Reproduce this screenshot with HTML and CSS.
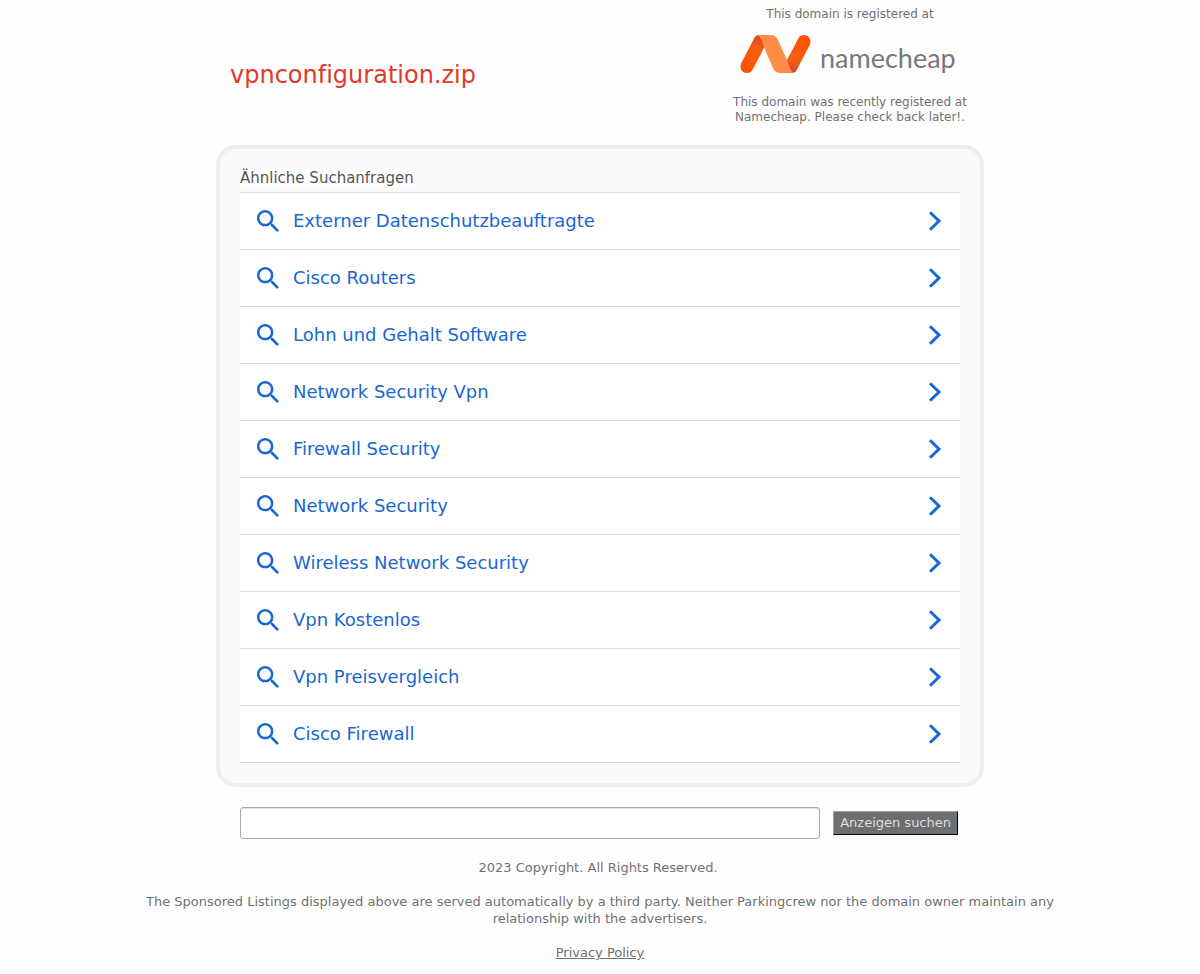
FILE: index.html
```html
<!DOCTYPE html>
<html lang="de">
<head>
<meta charset="utf-8">
<meta name="viewport" content="width=device-width, initial-scale=1">
<title>vpnconfiguration.zip</title>
<link rel="stylesheet" href="styles.css">
</head>
<body>
<svg class="sprite" aria-hidden="true">
  <symbol id="search" viewBox="3 3 17.490 17.490"><path fill="currentColor" d="M15.500 14h-.79l-.28-.27C15.410 12.590 16 11.110 16 9.500 16 5.910 13.090 3 9.500 3S3 5.910 3 9.500 5.910 16 9.500 16c1.610 0 3.090-.59 4.230-1.570l.27.28v.79l5 4.990L20.490 19l-4.990-5zm-6 0C7.010 14 5 11.990 5 9.500S7.010 5 9.500 5 14 7.010 14 9.500 11.990 14 9.500 14z"/></symbol>
  <symbol id="chevron" viewBox="0 0 14 20"><path d="M2 1.200 11 10 2 18.800" fill="none" stroke="currentColor" stroke-width="3"/></symbol>
</svg>
<header class="header">
  <h1 class="domain">vpnconfiguration.zip</h1>
  <div class="registrar">
    <p class="note">This domain is registered at</p>
    <a class="logo" href="#">
      <svg class="mark" viewBox="0 0 70 38" aria-hidden="true">
        <defs>
          <linearGradient id="left" x1="18" y1="0" x2="6" y2="34" gradientUnits="userSpaceOnUse"><stop offset="0" stop-color="#d93d30"/><stop offset=".35" stop-color="#f2600f"/><stop offset="1" stop-color="#ff5100"/></linearGradient>
          <linearGradient id="right" x1="52" y1="38" x2="64" y2="4" gradientUnits="userSpaceOnUse"><stop offset="0" stop-color="#d93d30"/><stop offset=".35" stop-color="#f2600f"/><stop offset="1" stop-color="#ff5100"/></linearGradient>
        </defs>
        <path d="M18 0c-2 0-3.500 1.500-4.500 3.500L.8 28C-1.500 33 1.500 38 6.500 38c3 0 4.700-1.500 6-4L25 10z" fill="url(#left)"/>
        <path d="M52 38c2 0 3.500-1.500 4.500-3.500L69.200 10C71.500 5 68.500 0 63.500 0c-3 0-4.700 1.500-6 4L45 28z" fill="url(#right)"/>
        <path d="M16.500 0H30c3.500 0 5.500 1.200 7 4l9 20c2.500 5.500 3.500 12 7.500 14H40c-3.500 0-5.500-1.500-7-4L23.800 13C21.500 7 21 1 16.500 0z" fill="#ff8c44"/>
      </svg>
      <span class="wordmark">namecheap</span>
    </a>
    <p class="note">This domain was recently registered at Namecheap. Please check back later!.</p>
  </div>
</header>
<main class="main">
  <section class="panel">
    <h2 class="heading"><span class="heading-text">Ähnliche Suchanfragen</span></h2>
    <ul class="list">
      <li><a class="item" href="#"><svg class="glass"><use href="#search"/></svg><span class="label">Externer Datenschutzbeauftragte</span><svg class="arrow"><use href="#chevron"/></svg></a></li>
      <li><a class="item" href="#"><svg class="glass"><use href="#search"/></svg><span class="label">Cisco Routers</span><svg class="arrow"><use href="#chevron"/></svg></a></li>
      <li><a class="item" href="#"><svg class="glass"><use href="#search"/></svg><span class="label">Lohn und Gehalt Software</span><svg class="arrow"><use href="#chevron"/></svg></a></li>
      <li><a class="item" href="#"><svg class="glass"><use href="#search"/></svg><span class="label">Network Security Vpn</span><svg class="arrow"><use href="#chevron"/></svg></a></li>
      <li><a class="item" href="#"><svg class="glass"><use href="#search"/></svg><span class="label">Firewall Security</span><svg class="arrow"><use href="#chevron"/></svg></a></li>
      <li><a class="item" href="#"><svg class="glass"><use href="#search"/></svg><span class="label">Network Security</span><svg class="arrow"><use href="#chevron"/></svg></a></li>
      <li><a class="item" href="#"><svg class="glass"><use href="#search"/></svg><span class="label">Wireless Network Security</span><svg class="arrow"><use href="#chevron"/></svg></a></li>
      <li><a class="item" href="#"><svg class="glass"><use href="#search"/></svg><span class="label">Vpn Kostenlos</span><svg class="arrow"><use href="#chevron"/></svg></a></li>
      <li><a class="item" href="#"><svg class="glass"><use href="#search"/></svg><span class="label">Vpn Preisvergleich</span><svg class="arrow"><use href="#chevron"/></svg></a></li>
      <li><a class="item" href="#"><svg class="glass"><use href="#search"/></svg><span class="label">Cisco Firewall</span><svg class="arrow"><use href="#chevron"/></svg></a></li>
    </ul>
  </section>
  <form class="search">
    <input class="query" type="text" name="q" aria-label="Anzeigen suchen">
    <button class="submit" type="submit">Anzeigen suchen</button>
  </form>
</main>
<footer class="footer">
  <p class="copyright">2023 Copyright. All Rights Reserved.</p>
  <p>The Sponsored Listings displayed above are served automatically by a third party. Neither Parkingcrew nor the domain owner maintain any relationship with the advertisers.</p>
  <p><a class="policy" href="#">Privacy Policy</a></p>
</footer>
</body>
</html>
```
FILE: styles.css
```css
* {
  box-sizing: border-box;
}

body {
  margin: 0;
  background: #fefefe;
  color: #717171;
  font-family: "DejaVu Sans", sans-serif;
  font-size: 13px;
  line-height: 17px;
}

h1, h2, p, ul {
  margin: 0;
  padding: 0;
  font-weight: 400;
}

.sprite {
  display: none;
}

.header,
.main {
  max-width: 768px;
  margin: 0 auto;
}

.header {
  display: flex;
  justify-content: space-between;
  padding: 7px 4px 20px 14px;
}

.domain {
  padding-top: 54px;
  color: #e03a26;
  font-size: 24px;
  font-variant-ligatures: none;
  line-height: 28px;
}

.registrar {
  width: 260px;
  text-align: center;
}

.note {
  padding: 0 10px;
  font-size: 12px;
  line-height: 15px;
}

.logo {
  display: flex;
  align-items: flex-start;
  gap: 9px;
  height: 73px;
  padding: 13px 0 0 20px;
  color: #77787b;
  text-decoration: none;
}

.mark {
  width: 71px;
  height: 38px;
}

.wordmark {
  padding-top: 7px;
  font-family: Lato, sans-serif;
  font-size: 27px;
  font-weight: 400;
  line-height: 32px;
}

.panel {
  padding: 20px;
  border: 4px solid #eee;
  border-radius: 20px;
  background: #fafafa;
}

.heading {
  padding-bottom: 5px;
  color: #555;
  font-size: 15px;
  line-height: 18px;
}

.heading-text {
  background: #fefefe;
}

.list {
  border-top: 1px solid #dadce0;
  background: #fff;
  list-style: none;
}

.item {
  display: flex;
  align-items: center;
  min-height: 57px;
  padding: 0 18px 0 17px;
  border-bottom: 1px solid #dadce0;
  color: #1967d2;
  font-size: 18px;
  line-height: 22px;
  text-decoration: none;
}

.glass {
  width: 22px;
  height: 22px;
  margin-right: 14px;
}

.label {
  flex: 1;
}

.arrow {
  width: 14px;
  height: 20px;
}

.search {
  display: flex;
  align-items: center;
  gap: 13px;
  padding: 20px 26px 20px 24px;
}

.query {
  flex: 1;
  min-width: 0;
  height: 32px;
  padding: 0 8px;
  border: 1px solid #a9a9a9;
  border-radius: 3px;
  background: #fff;
  box-shadow: inset 0 1px 1px #ddd;
  font: inherit;
}

.submit {
  height: 24px;
  padding: 0 6px 2px;
  border: 1px solid;
  border-color: #a0a0a0 #000 #000 #a0a0a0;
  background: #6d6e70;
  color: #ddd;
  font: inherit;
}

.footer {
  display: grid;
  gap: 17px;
  width: 80%;
  margin: 0 auto;
  padding-bottom: 12px;
  text-align: center;
}

.copyright {
  padding-right: 4px;
}

.policy {
  color: inherit;
}
```
